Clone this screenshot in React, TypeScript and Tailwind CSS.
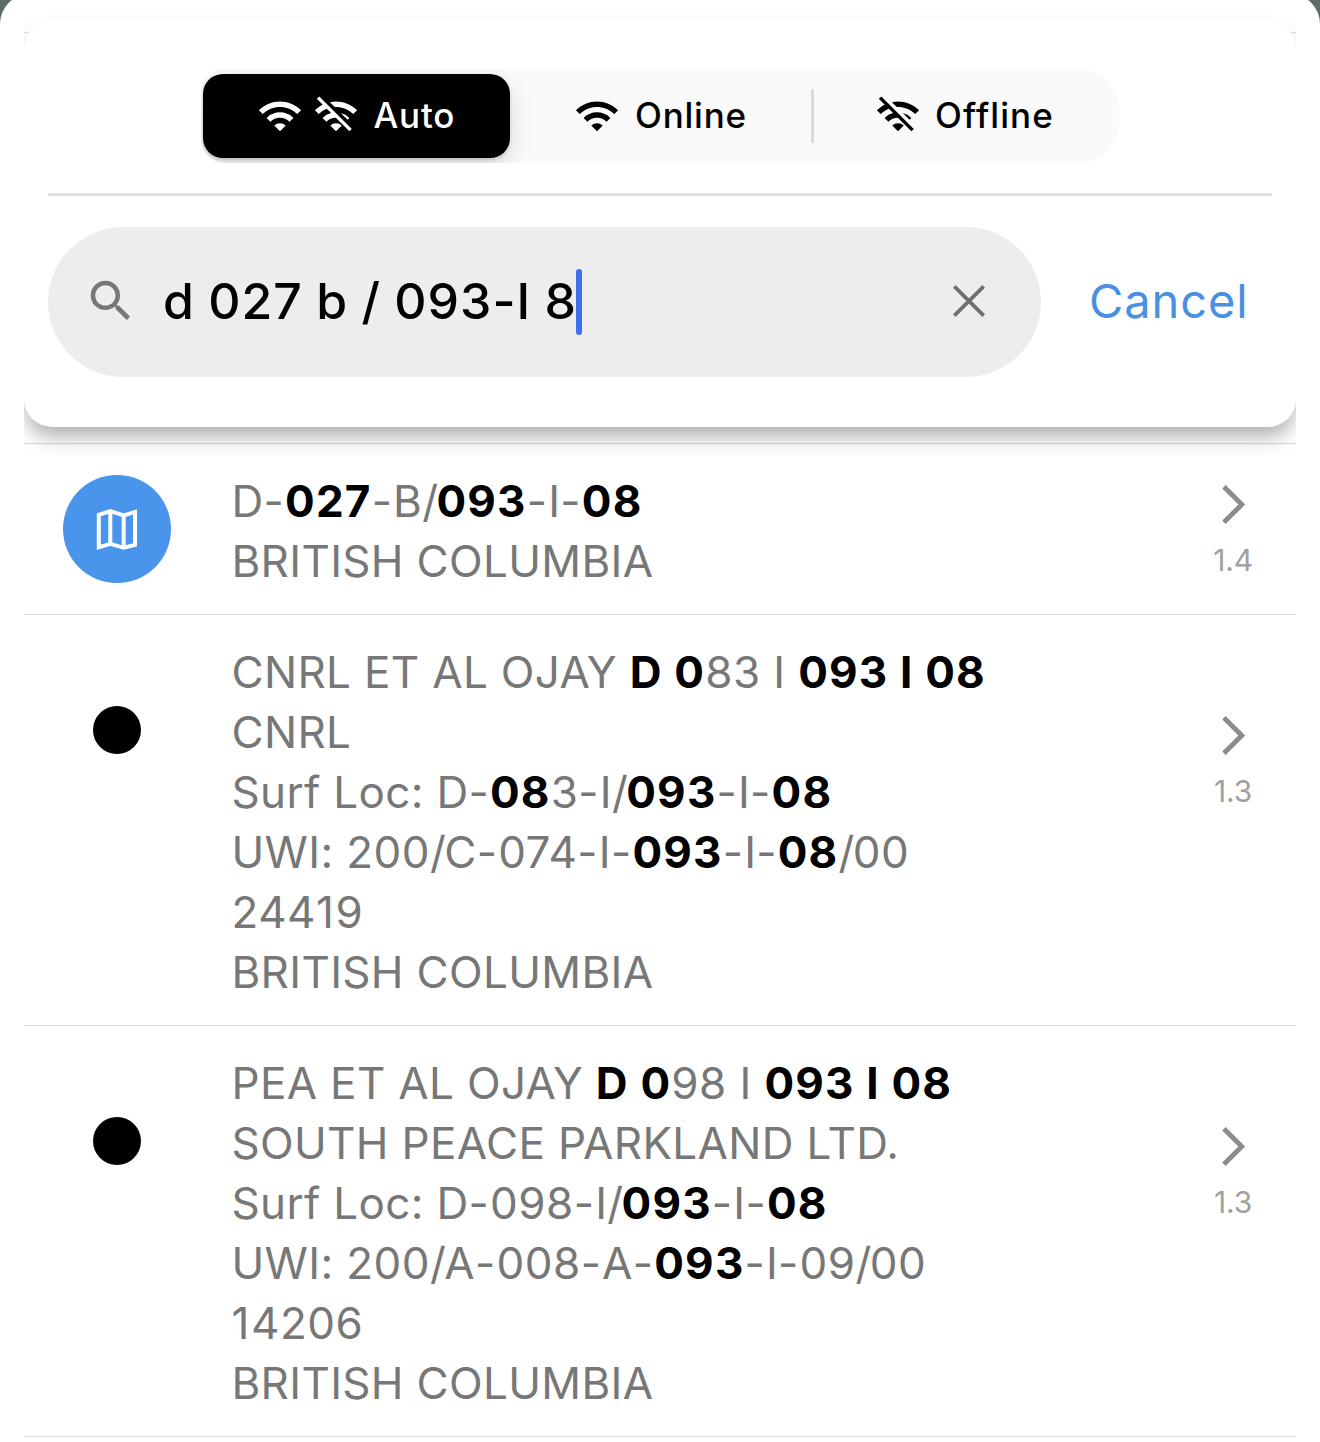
import clsx from 'clsx';
import { MdArrowForwardIos, MdSearch, MdWifi, MdWifiOff } from 'react-icons/md';

interface Result {
  kind: 'grid' | 'well';
  // Matched fragments are wrapped in asterisks.
  lines: string[];
  score: string;
}

const RESULTS: Result[] = [
  {
    kind: 'grid',
    lines: ['D-*027*-B/*093*-I-*08*', 'BRITISH COLUMBIA'],
    score: '1.4',
  },
  {
    kind: 'well',
    lines: [
      'CNRL ET AL OJAY *D 0*83 I *093 I 08*',
      'CNRL',
      'Surf Loc: D-*08*3-I/*093*-I-*08*',
      'UWI: 200/C-074-I-*093*-I-*08*/00',
      '24419',
      'BRITISH COLUMBIA',
    ],
    score: '1.3',
  },
  {
    kind: 'well',
    lines: [
      'PEA ET AL OJAY *D 0*98 I *093 I 08*',
      'SOUTH PEACE PARKLAND LTD.',
      'Surf Loc: D-098-I/*093*-I-*08*',
      'UWI: 200/A-008-A-*093*-I-09/00',
      '14206',
      'BRITISH COLUMBIA',
    ],
    score: '1.3',
  },
];

// Digits and separators are spaced a little differently from letters.
function tracking(token: string): string | undefined {
  if (token === '1') return 'tracking-[1.6px]';
  if (token === '/') return 'tracking-[-1.6px]';
  if (token === '-') return 'tracking-[1.2px]';
  if (/^\d/.test(token)) return 'tracking-[0.5px]';
  return undefined;
}

function Plain({ text }: { text: string }) {
  return text
    .split(/(1|[02-9]+|\/|-)/)
    .filter(Boolean)
    .map((token, i) => (
      <span key={i} className={tracking(token)}>
        {token}
      </span>
    ));
}

function Highlighted({ text }: { text: string }) {
  return (
    <p className="h-[60px] whitespace-pre">
      {text.split('*').map((part, i) =>
        i % 2 === 1 ? (
          <b key={i} className="font-bold tracking-[1.2px] text-black">
            {part}
          </b>
        ) : (
          <Plain key={i} text={part} />
        )
      )}
    </p>
  );
}

function MapIcon() {
  return (
    <svg
      width="42"
      height="42"
      viewBox="0 0 42 42"
      fill="none"
      stroke="white"
      strokeWidth="4"
      className="mt-px">
      <path d="M2.8 5.8 14.3 2.2 27.7 6.4 39 2.9V35.9L27.7 38.8 14.3 34.9 2.8 38.4Z" />
      <path d="M14.3 2.2V34.9M27.7 6.4V38.8" />
    </svg>
  );
}

function ClearIcon() {
  return (
    <svg
      width="34"
      height="34"
      viewBox="0 0 34 34"
      stroke="#707070"
      strokeWidth="3.8"
      className="mr-[10px] ml-auto">
      <path d="M2.3 2.3 31.7 31.7M31.7 2.3 2.3 31.7" />
    </svg>
  );
}

function ResultRow({ result }: { result: Result }) {
  const grid = result.kind === 'grid';
  return (
    <li className="flex items-start border-b border-[#dcdcdc] pt-[27px] pb-[23px]">
      <div className="flex w-[186px] justify-center">
        {grid ? (
          <span className="mt-1 flex size-[108px] items-center justify-center rounded-full bg-[#4a95ec]">
            <MapIcon />
          </span>
        ) : (
          <span className="mt-16 size-12 rounded-full bg-black" />
        )}
      </div>
      <div className="ml-[21.5px] flex-1 text-[44px] leading-[60px] tracking-[0.33px] text-[#777]">
        {result.lines.map((line, i) => (
          <Highlighted key={i} text={line} />
        ))}
      </div>
      <div
        className={clsx(
          'mr-[31px] flex w-16 flex-col items-center text-[#8c8c8c]',
          grid ? 'mt-[10px]' : 'mt-[70px]'
        )}>
        <MdArrowForwardIos size={47} />
        <span className="mt-[15px] text-[30px] leading-[34px] tracking-[-0.2px] text-[#a0a0a0]">
          {result.score}
        </span>
      </div>
    </li>
  );
}

function ModeSwitch() {
  return (
    <div className="flex h-[94px] w-[918px] items-center overflow-hidden rounded-l-[24px] rounded-r-[40px] bg-[#fafafa] text-[35px] font-medium tracking-[0.8px] text-black">
      <button
        type="button"
        className="ml-[1.5px] flex h-[84px] w-[307px] items-center rounded-[20px] bg-black pl-[54.5px] text-white shadow-[0_8px_24px_rgba(0,0,0,0.14),0_2px_3px_rgba(0,0,0,0.14)]">
        <MdWifi size={46} />
        <MdWifiOff size={46} className="ml-[10px]" />
        <span className="ml-[14.5px] pb-px">Auto</span>
      </button>
      <button type="button" className="flex w-[301px] items-center pl-[64.5px]">
        <MdWifi size={46} />
        <span className="ml-[15px] pb-px">Online</span>
      </button>
      <span className="h-[54px] w-[3px] rounded-full bg-[#dadadc]" />
      <button type="button" className="flex items-center pl-[61.5px]">
        <MdWifiOff size={46} />
        <span className="ml-[14px] pb-px tracking-[1.1px]">Offline</span>
      </button>
    </div>
  );
}

function SearchHeader() {
  return (
    <header className="relative z-10 flex h-[407px] flex-col items-center rounded-[28px] bg-white px-6 pt-[49px] shadow-[0_12px_20px_-2px_rgba(0,0,0,0.31)]">
      <ModeSwitch />
      <div className="mt-[30px] h-[3px] w-full bg-[#e1e1e1]" />
      <div className="mt-[31px] flex w-full items-center">
        <div className="flex h-[150px] w-[993px] items-center rounded-full bg-[#ededed] pr-[45px] pb-[2px] pl-9">
          <MdSearch size={54} className="text-[#777]" />
          <span className="ml-[25px] text-[50px] leading-none font-medium tracking-[1px] whitespace-pre text-black [word-spacing:-1px]">
            d 027 b / 093-I 8
          </span>
          <span className="-ml-px mt-[2px] h-[66px] w-[6px] rounded-full bg-[#3c6ff0]" />
          <ClearIcon />
        </div>
        <button
          type="button"
          className="ml-12 pb-[4px] text-[47px] leading-none tracking-[0.9px] text-[#4a90e2]">
          Cancel
        </button>
      </div>
    </header>
  );
}

export default function App() {
  return (
    <div className="h-[1442px] w-[1320px] overflow-hidden bg-[#5c6d68] font-['Inter',sans-serif]">
      <div className="-mt-[6px] h-[1448px] rounded-t-[30px] bg-white px-6 pt-[26px]">
        <div className="relative -mt-5 overflow-hidden pt-5">
          {/* list separator scrolled under the header, visible only at its rounded corners */}
          <hr className="absolute inset-x-0 top-8 border-[#dcdcdc]" />
          <SearchHeader />
          <ul className="mt-4 border-t border-[#dcdcdc]">
            {RESULTS.map((result, i) => (
              <ResultRow key={i} result={result} />
            ))}
          </ul>
        </div>
      </div>
    </div>
  );
}
